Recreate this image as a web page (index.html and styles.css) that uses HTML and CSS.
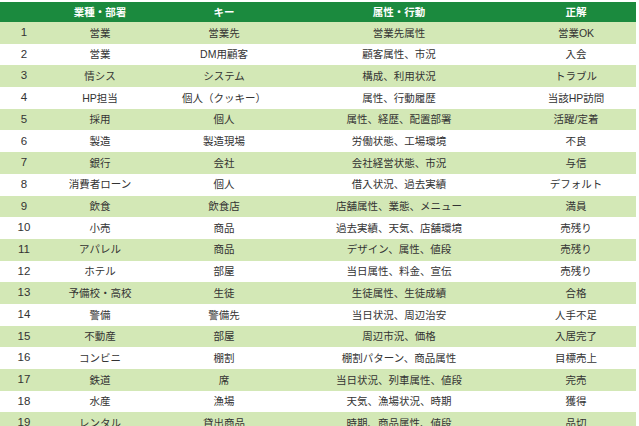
FILE: index.html
```html
<!DOCTYPE html>
<html lang="ja">
<head>
<meta charset="utf-8">
<link rel="stylesheet" href="styles.css">
</head>
<body>
<div class="table">
  <div class="row head"><div class="c n"></div><div class="c">業種・部署</div><div class="c">キー</div><div class="c">属性・行動</div><div class="c last">正解</div></div>
  <div class="row odd"><div class="c n">1</div><div class="c">営業</div><div class="c">営業先</div><div class="c">営業先属性</div><div class="c last">営業OK</div></div>
  <div class="row"><div class="c n">2</div><div class="c">営業</div><div class="c">DM用顧客</div><div class="c">顧客属性、市況</div><div class="c last">入会</div></div>
  <div class="row odd"><div class="c n">3</div><div class="c">情シス</div><div class="c">システム</div><div class="c">構成、利用状況</div><div class="c last">トラブル</div></div>
  <div class="row"><div class="c n">4</div><div class="c">HP担当</div><div class="c">個人（クッキー）</div><div class="c">属性、行動履歴</div><div class="c last">当該HP訪問</div></div>
  <div class="row odd"><div class="c n">5</div><div class="c">採用</div><div class="c">個人</div><div class="c">属性、経歴、配置部署</div><div class="c last">活躍/定着</div></div>
  <div class="row"><div class="c n">6</div><div class="c">製造</div><div class="c">製造現場</div><div class="c">労働状態、工場環境</div><div class="c last">不良</div></div>
  <div class="row odd"><div class="c n">7</div><div class="c">銀行</div><div class="c">会社</div><div class="c">会社経営状態、市況</div><div class="c last">与信</div></div>
  <div class="row"><div class="c n">8</div><div class="c">消費者ローン</div><div class="c">個人</div><div class="c">借入状況、過去実績</div><div class="c last">デフォルト</div></div>
  <div class="row odd"><div class="c n">9</div><div class="c">飲食</div><div class="c">飲食店</div><div class="c">店舗属性、業態、メニュー</div><div class="c last">満員</div></div>
  <div class="row"><div class="c n">10</div><div class="c">小売</div><div class="c">商品</div><div class="c">過去実績、天気、店舗環境</div><div class="c last">売残り</div></div>
  <div class="row odd"><div class="c n">11</div><div class="c">アパレル</div><div class="c">商品</div><div class="c">デザイン、属性、値段</div><div class="c last">売残り</div></div>
  <div class="row"><div class="c n">12</div><div class="c">ホテル</div><div class="c">部屋</div><div class="c">当日属性、料金、宣伝</div><div class="c last">売残り</div></div>
  <div class="row odd"><div class="c n">13</div><div class="c">予備校・高校</div><div class="c">生徒</div><div class="c">生徒属性、生徒成績</div><div class="c last">合格</div></div>
  <div class="row"><div class="c n">14</div><div class="c">警備</div><div class="c">警備先</div><div class="c">当日状況、周辺治安</div><div class="c last">人手不足</div></div>
  <div class="row odd"><div class="c n">15</div><div class="c">不動産</div><div class="c">部屋</div><div class="c">周辺市況、価格</div><div class="c last">入居完了</div></div>
  <div class="row"><div class="c n">16</div><div class="c">コンビニ</div><div class="c">棚割</div><div class="c">棚割パターン、商品属性</div><div class="c last">目標売上</div></div>
  <div class="row odd"><div class="c n">17</div><div class="c">鉄道</div><div class="c">席</div><div class="c">当日状況、列車属性、値段</div><div class="c last">完売</div></div>
  <div class="row"><div class="c n">18</div><div class="c">水産</div><div class="c">漁場</div><div class="c">天気、漁場状況、時期</div><div class="c last">獲得</div></div>
  <div class="row odd"><div class="c n">19</div><div class="c">レンタル</div><div class="c">貸出商品</div><div class="c">時期、商品属性、値段</div><div class="c last">品切</div></div>
</div>
</body>
</html>
```

FILE: styles.css
```css
html, body {
  margin: 0;
  padding: 0;
  background: #ffffff;
}
body {
  padding-top: 2px;
  font-family: "Liberation Sans", "Noto Sans CJK JP", sans-serif;
  font-size: 10.5px;
  color: #333333;
  overflow: hidden;
}
.table {
  width: 636px;
}
.row {
  display: grid;
  grid-template-columns: 48px 104px 144px 206px 134px;
  height: 21.7px;
  align-items: center;
}
.row.head {
  height: 20px;
  background: #1b8a3e;
  color: #ffffff;
  font-weight: bold;
}
.row.odd {
  background: #d3e8b6;
}
.c {
  text-align: center;
  white-space: nowrap;
  line-height: 1;
}
.c.n {
  font-size: 11.5px;
}
.c.last {
  padding-left: 14px;
}
```
